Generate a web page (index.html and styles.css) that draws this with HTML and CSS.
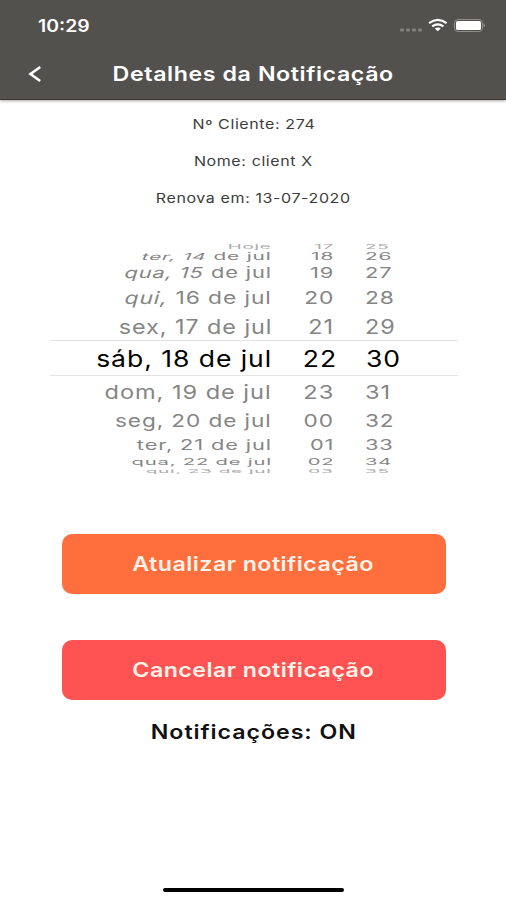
FILE: index.html
```html
<!DOCTYPE html>
<html lang="pt">
<head>
  <meta charset="UTF-8">
  <meta name="viewport" content="width=device-width, initial-scale=1.0">
  <title>Detalhes da Notificação</title>
  <link rel="stylesheet" href="styles.css">
</head>
<body>
  <div class="screen">
    <header class="header">
      <div class="status-bar">
        <span class="time"><span class="wide">10:29</span></span>
        <svg class="status-icons" width="88" height="16" viewBox="0 0 88 16">
          <g fill="#83827f">
            <rect x="2" y="10.500" width="4" height="3" rx="1"/>
            <rect x="8" y="10.500" width="4" height="3" rx="1"/>
            <rect x="14" y="10.500" width="4" height="3" rx="1"/>
            <rect x="20" y="10.500" width="4" height="3" rx="1"/>
          </g>
          <g fill="none" stroke="#fff" stroke-width="2.2">
            <path d="M31 5.200Q39.800 -1.400 48.600 5.200"/>
            <path d="M34.200 8.400Q39.800 4.200 45.400 8.400"/>
          </g>
          <path d="M36.800 10.500Q39.800 8.500 42.800 10.500L39.800 13.300Z" fill="#fff"/>
          <rect x="56.500" y="1.500" width="28" height="12" rx="3.400" fill="none" stroke="#8f8e8b"/>
          <rect x="58" y="3" width="25" height="9" rx="1.500" fill="#fff"/>
          <path d="M85.600 5Q88 7.300 85.600 9.500Z" fill="#a09f9d"/>
        </svg>
      </div>
      <div class="nav-bar">
        <svg class="back" width="14" height="18" viewBox="0 0 14 18">
          <path d="M12.200 2L2.500 9L12.200 16" fill="none" stroke="#fff" stroke-width="2.600"/>
        </svg>
        <h1 class="title"><span class="wide">Detalhes da Notificação</span></h1>
      </div>
    </header>

    <main class="content">
      <div class="info">
        <p><span class="wide">Nº Cliente: 274</span></p>
        <p><span class="wide">Nome: client X</span></p>
        <p><span class="wide">Renova em: 13-07-2020</span></p>
      </div>

      <div class="picker">
        <div class="row up5"><span class="day">Hoje</span><span class="hour">17</span><span class="minute">25</span></div>
        <div class="row up4"><span class="day"><i>ter, 14</i> de jul</span><span class="hour">18</span><span class="minute">26</span></div>
        <div class="row up3"><span class="day"><i>qua, 15</i> de jul</span><span class="hour">19</span><span class="minute">27</span></div>
        <div class="row up2"><span class="day"><i>qui,</i> 16 de jul</span><span class="hour">20</span><span class="minute">28</span></div>
        <div class="row up1"><span class="day">sex, 17 de jul</span><span class="hour">21</span><span class="minute">29</span></div>
        <div class="row selected"><span class="day">sáb, 18 de jul</span><span class="hour">22</span><span class="minute">30</span></div>
        <div class="row down1"><span class="day">dom, 19 de jul</span><span class="hour">23</span><span class="minute">31</span></div>
        <div class="row down2"><span class="day">seg, 20 de jul</span><span class="hour">00</span><span class="minute">32</span></div>
        <div class="row down3"><span class="day">ter, 21 de jul</span><span class="hour">01</span><span class="minute">33</span></div>
        <div class="row down4"><span class="day">qua, 22 de jul</span><span class="hour">02</span><span class="minute">34</span></div>
        <div class="row down5"><span class="day">qui, 23 de jul</span><span class="hour">03</span><span class="minute">35</span></div>
      </div>

      <div class="actions">
        <button class="btn update"><span class="wide">Atualizar notificação</span></button>
        <button class="btn cancel"><span class="wide">Cancelar notificação</span></button>
      </div>
      <p class="state"><span class="wide">Notificações: ON</span></p>
    </main>

    <div class="home-indicator"></div>
  </div>
</body>
</html>
```

FILE: styles.css
```css
* {
  margin: 0;
  padding: 0;
  box-sizing: border-box;
}

body {
  background: #fff;
  font-family: Inter, "Liberation Sans", sans-serif;
  color: #111;
}

.screen {
  width: 506px;
  height: 900px;
  display: flex;
  flex-direction: column;
  overflow: hidden;
}

.wide {
  display: inline-block;
  white-space: nowrap;
  transform: scaleX(1.16);
}

.header {
  height: 100px;
  flex: none;
  background: #53514e;
  border-bottom: 1px solid #393836;
  box-shadow: 0 1px 3px rgba(0, 0, 0, 0.35);
  color: #fff;
}

.status-bar {
  height: 51px;
  padding: 0 20px 0 38px;
  display: flex;
  align-items: center;
  justify-content: space-between;
}

.time {
  font-size: 17px;
  font-weight: 600;
}

.time .wide {
  transform: scaleX(1.14);
  transform-origin: left;
}

.nav-bar {
  height: 45px;
  padding: 0 28px;
  display: grid;
  grid-template-columns: 14px 1fr 14px;
  align-items: center;
}

.title {
  padding-left: 1px;
  font-size: 20px;
  font-weight: 600;
  line-height: 24px;
  letter-spacing: 0.5px;
  text-align: center;
}

.content {
  flex: 1;
}

.info {
  padding: 6px 0 0 1px;
  font-size: 13px;
  line-height: 37px;
  letter-spacing: 0.5px;
  text-align: center;
  color: #3c3c3c;
}

.info .wide {
  transform: scaleX(1.23);
}

.picker {
  margin: 25px 48px 0 50px;
  height: 232px;
  display: flex;
  flex-direction: column;
}

.row {
  flex: none;
  padding-top: 1px;
  display: grid;
  grid-template-columns: 222px 62px 1fr;
  align-items: center;
  font-size: 20px;
  line-height: 0;
  letter-spacing: 0.8px;
  white-space: nowrap;
  color: #858585;
}

.day,
.hour {
  justify-self: end;
  transform-origin: right;
}

.minute {
  justify-self: start;
  margin-left: 31px;
  transform-origin: left;
}

.row i {
  display: inline-block;
  font-style: normal;
  transform: skewX(-12deg);
}

.selected {
  height: 36px;
  border-top: 1px solid #e3e3e3;
  border-bottom: 1px solid #e3e3e3;
  font-size: 22.5px;
  color: #000;
}

.selected .hour {
  margin-right: -3px;
}

.selected .minute {
  margin-left: 32px;
}

.up5 { height: 8px; color: #aaa; }
.up4 { height: 12px; }
.up3 { height: 20px; }
.up2 { height: 30px; }
.up1 { height: 28px; }
.down1 { height: 30px; }
.down2 { height: 28px; }
.down3 { height: 20px; }
.down4 { height: 14px; }
.down5 { height: 4px; color: #aaa; }

/* rows get flatter and narrower towards the ends of the wheel */
.up5 span { transform: scale(0.94, 0.28); }
.up4 span { transform: scale(1.04, 0.48); }
.up3 span { transform: scale(1.09, 0.75); }
.up2 span { transform: scale(1.14, 0.87); }
.up1 span { transform: scale(1.17, 0.98); }
.selected span { transform: scaleX(1.18); }
.down1 span { transform: scale(1.18, 0.96); }
.down2 span { transform: scale(1.13, 0.89); }
.down3 span { transform: scale(1.09, 0.69); }
.down4 span { transform: scale(1.01, 0.45); }
.down5 span { transform: scale(0.95, 0.27); }

.actions {
  margin-top: 60px;
  padding-left: 1px;
  display: flex;
  flex-direction: column;
  align-items: center;
  gap: 46px;
}

.btn {
  width: 384px;
  height: 60px;
  border: none;
  border-radius: 10px;
  font: 600 20px Inter, "Liberation Sans", sans-serif;
  letter-spacing: 0.4px;
  color: #fff2e8;
}

.update { background: #ff6f3d; }
.cancel { background: #ff5252; }

.state {
  margin-top: 19px;
  padding-left: 2px;
  font-size: 20px;
  font-weight: 600;
  line-height: 26px;
  letter-spacing: 0.8px;
  text-align: center;
}

.home-indicator {
  width: 181px;
  height: 4px;
  margin: 0 auto 8px;
  border-radius: 2px;
  background: #000;
}
```
